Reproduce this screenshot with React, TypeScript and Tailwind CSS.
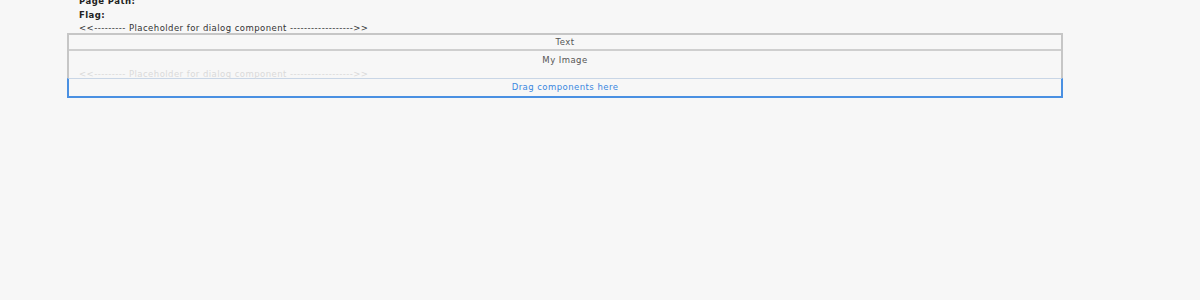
export default function App() {
  return (
    <div className="min-h-[300px] w-[1200px] bg-[#f7f7f7] font-['DejaVu_Sans',sans-serif] overflow-hidden">
      <div className="ml-[67px] w-[996px] -mt-[6px]">
        <div className="pl-[12px] text-[8.5px] tracking-[0.45px] leading-[14px] text-[#222]">
          <div className="font-bold">Page Path:</div>
          <div className="font-bold">Flag:</div>
          <div className="mt-[2px] leading-[9px] text-[#333]">&lt;&lt;--------- Placeholder for dialog component ------------------&gt;&gt;</div>
        </div>
        <div className="border-2 border-[#c6c6c6] border-b-0 text-[8.5px] tracking-[0.45px]">
          <div className="h-[16px] flex items-center justify-center text-[#555] border-b-2 border-[#cfcfcf]">
            Text
          </div>
          <div className="h-[28px] flex flex-col">
            <div className="h-[19px] flex items-center justify-center text-[#555]">My Image</div>
            <div className="pl-[10px] leading-[8px] text-[#dadada]">
              &lt;&lt;--------- Placeholder for dialog component ------------------&gt;&gt;
            </div>
          </div>
        </div>
        <div className="-mt-px h-[20px] border-2 border-t border-[#4a90e2] border-t-[#c9d6e6] flex items-center justify-center text-[8.5px] tracking-[0.45px] text-[#3a87e0]">
          Drag components here
        </div>
      </div>
    </div>
  );
}
